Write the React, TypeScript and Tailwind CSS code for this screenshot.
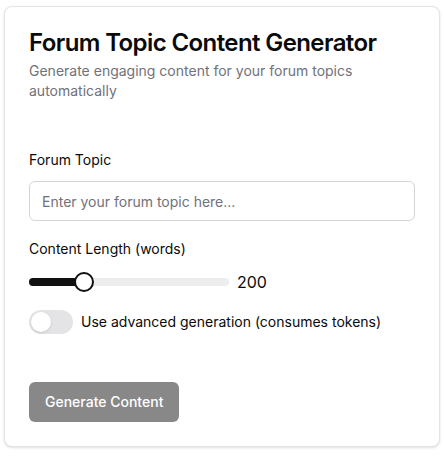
import React, { useState } from "react";

const App = () => {
  const [topic, setTopic] = useState("");
  const [length, setLength] = useState(200);
  const [advanced, setAdvanced] = useState(false);

  const min = 100;
  const max = 500;
  const pct = ((length - min) / (max - min)) * 100;

  return (
    <div className="min-h-screen bg-white px-1 pt-[6px] font-['Inter',sans-serif] text-[#0a0a0a]">
      <div className="w-[436px] rounded-lg border border-[#e4e4e7] bg-white shadow-sm">
        <div className="flex flex-col gap-1.5 p-6">
          <h1 className="text-2xl leading-none font-semibold tracking-tight">Forum Topic Content Generator</h1>
          <p className="text-sm text-[#71717a]">Generate engaging content for your forum topics automatically</p>
        </div>

        <div className="flex flex-col px-6 pt-[25px]">
          <label className="text-sm leading-5">Forum Topic</label>
          <input
            value={topic}
            onChange={(e) => setTopic(e.target.value)}
            placeholder="Enter your forum topic here..."
            className="mt-[11px] h-10 w-full rounded-md border border-[#d4d4d8] bg-white px-3 text-sm placeholder:text-[#71717a] outline-none"
          />

          <label className="mt-[18px] text-sm leading-5">Content Length (words)</label>
          <div className="mt-[11px] flex items-center gap-2">
            <div className="relative h-5 w-[200px]">
              <div className="absolute top-1.5 h-2 w-full overflow-hidden rounded-full bg-[#ededed]">
                <div className="h-full bg-[#111]" style={{ width: `${pct}%` }} />
              </div>
              <div
                className="absolute top-0 h-5 w-5 rounded-full border-2 border-[#111] bg-white"
                style={{ left: `calc(${pct}% * 0.9)` }}
              />
              <input
                type="range"
                min={min}
                max={max}
                value={length}
                onChange={(e) => setLength(Number(e.target.value))}
                className="absolute inset-0 w-full opacity-0"
              />
            </div>
            <span className="text-base">{length}</span>
          </div>

          <div className="mt-[16px] flex items-center gap-2">
            <button
              onClick={() => setAdvanced(!advanced)}
              className={`flex h-6 w-11 items-center rounded-full p-0.5 ${advanced ? "bg-[#111]" : "bg-[#e4e4e7]"}`}
            >
              <span className={`h-5 w-5 rounded-full bg-white shadow ${advanced ? "translate-x-5" : ""}`} />
            </button>
            <span className="text-sm">Use advanced generation (consumes tokens)</span>
          </div>
        </div>

        <div className="px-6 pt-12 pb-6">
          <button className="h-10 rounded-md bg-[#111]/50 px-4 text-sm font-medium text-white">Generate Content</button>
        </div>
      </div>
    </div>
  );
};

export default App;
